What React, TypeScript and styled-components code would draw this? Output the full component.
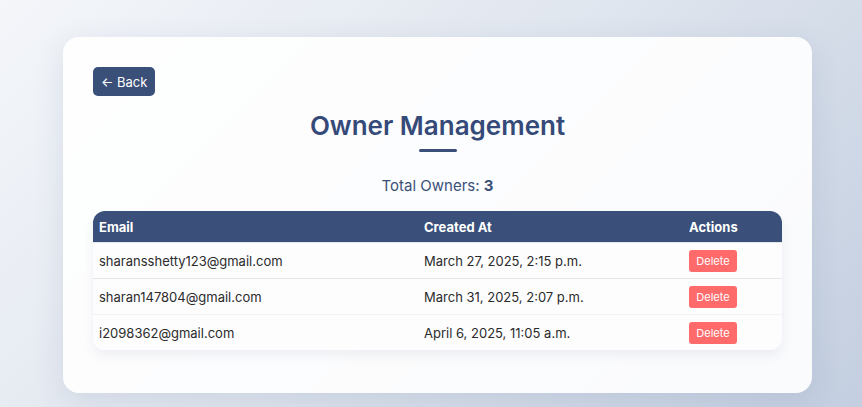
import React from 'react'
import styled, { createGlobalStyle } from 'styled-components'

interface Owner {
  email: string
  createdAt: string
}

const owners: Owner[] = [
  { email: 'sharansshetty123@gmail.com', createdAt: 'March 27, 2025, 2:15 p.m.' },
  { email: 'sharan147804@gmail.com', createdAt: 'March 31, 2025, 2:07 p.m.' },
  { email: 'i2098362@gmail.com', createdAt: 'April 6, 2025, 11:05 a.m.' }
]

const GlobalStyle = createGlobalStyle`
  html, body {
    margin: 0;
    padding: 0;
    height: 100%;
  }
  body {
    font-family: Inter, 'Noto Sans', sans-serif;
    background: linear-gradient(135deg, #f4f6fa 0%, #dfe5ee 50%, #c3cee0 100%);
    overflow: hidden;
  }
  #root {
    min-height: 100vh;
  }
`

const App = () => {
  return (
    <Page>
      <GlobalStyle />
      <Card>
        <BackButton>← Back</BackButton>
        <Title>Owner Management</Title>
        <Underline />
        <Total>
          Total Owners: <strong>{owners.length}</strong>
        </Total>
        <Table>
          <HeadRow>
            <HeadCell>Email</HeadCell>
            <HeadCell>Created At</HeadCell>
            <HeadCell>Actions</HeadCell>
          </HeadRow>
          {owners.map((owner, i) => (
            <Row key={owner.email} last={i === owners.length - 1}>
              <Cell>{owner.email}</Cell>
              <Cell>{owner.createdAt}</Cell>
              <Cell>
                <DeleteButton>Delete</DeleteButton>
              </Cell>
            </Row>
          ))}
        </Table>
      </Card>
    </Page>
  )
}

const Page = styled.div`
  padding: 37px 50px 0 63px;
`

const Card = styled.div`
  width: 749px;
  height: 356px;
  box-sizing: border-box;
  padding: 30px;
  background: rgba(255, 255, 255, 0.9);
  border-radius: 16px;
  box-shadow: 0 8px 30px rgba(60, 80, 120, 0.12);
  display: flex;
  flex-direction: column;
`

const BackButton = styled.button`
  align-self: flex-start;
  height: 29px;
  padding: 0 8px;
  border: none;
  border-radius: 5px;
  background: #3a5079;
  color: #ffffff;
  font-family: Inter, sans-serif;
  font-size: 13px;
  cursor: pointer;
`

const Title = styled.h1`
  margin: 13px 0 0;
  text-align: center;
  font-size: 26px;
  font-weight: 600;
  line-height: 34px;
  color: #354a78;
`

const Underline = styled.div`
  width: 38px;
  height: 3px;
  margin: 6px auto 0;
  background: #3a5079;
  border-radius: 2px;
`

const Total = styled.div`
  margin-top: 24px;
  text-align: center;
  font-size: 15px;
  color: #3b5079;

  strong {
    font-weight: 700;
  }
`

const Table = styled.div`
  margin-top: 16px;
  border-radius: 12px;
  overflow: hidden;
  box-shadow: 0 6px 12px rgba(60, 80, 120, 0.08);
`

const HeadRow = styled.div`
  display: grid;
  grid-template-columns: 325px 265px 1fr;
  height: 31px;
  align-items: center;
  background: #3a4f79;
`

const HeadCell = styled.div`
  padding: 0 6px;
  color: #ffffff;
  font-size: 13px;
  font-weight: 700;
`

const Row = styled.div<{ last?: boolean }>`
  display: grid;
  grid-template-columns: 325px 265px 1fr;
  height: 36px;
  align-items: center;
  background: #fdfdfe;
  border-top: ${({ last }) => (last ? '1px solid #f1f2f5' : '1px solid #e3e6eb')};
  box-sizing: border-box;
`

const Cell = styled.div`
  padding: 0 6px;
  font-size: 13px;
  color: #2b2b2b;
`

const DeleteButton = styled.button`
  height: 22px;
  width: 48px;
  padding: 0;
  border: none;
  border-radius: 3px;
  background: #ff6b6b;
  color: #ffffff;
  font-family: Inter, sans-serif;
  font-size: 11px;
  cursor: pointer;
`

export default App
